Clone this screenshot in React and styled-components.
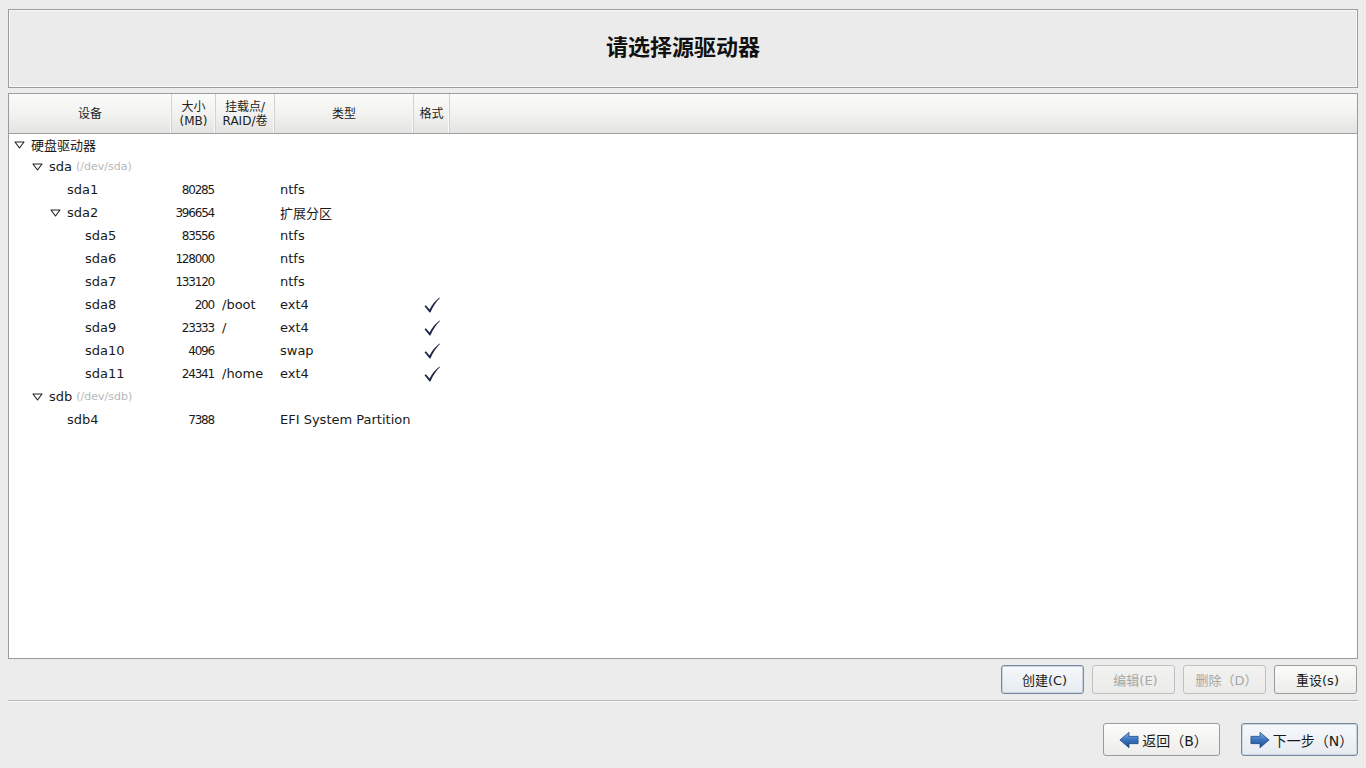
import React from "react";
import styled, { createGlobalStyle } from "styled-components";

const GlobalStyle = createGlobalStyle`
  html, body {
    margin: 0;
    padding: 0;
    background: #ececec;
  }
  body {
    font-family: "DejaVu Sans", "Noto Sans CJK SC", sans-serif;
    font-size: 13px;
    color: #1a1a1a;
  }
`;

const Page = styled.div`
  width: 1366px;
  height: 768px;
  box-sizing: border-box;
  padding: 9px 8px 0 8px;
  display: flex;
  flex-direction: column;
`;

const TitleBox = styled.div`
  height: 79px;
  box-sizing: border-box;
  border: 1px solid #9c9c9a;
  box-shadow: inset 1px 1px 0 #f8f8f6, inset -1px -1px 0 #f8f8f6;
  background: #ebebeb;
  display: flex;
  align-items: center;
  justify-content: center;
`;

const Title = styled.h1`
  margin: 0;
  font-size: 22px;
  font-weight: bold;
  font-family: "DejaVu Sans", "Noto Sans CJK SC", sans-serif;
  color: #111;
  padding-bottom: 8px;
`;

const Panel = styled.div`
  margin-top: 5px;
  height: 566px;
  box-sizing: border-box;
  border: 1px solid #9c9c9a;
  background: #fff;
  display: flex;
  flex-direction: column;
`;

const HeaderRow = styled.div`
  height: 40px;
  box-sizing: border-box;
  display: flex;
  background: linear-gradient(#fbfbfa, #f2f2f0 50%, #e3e3e1);
  border-bottom: 1px solid #a0a09e;
`;

const HeaderCell = styled.div`
  width: ${(p) => p.$w}px;
  box-sizing: border-box;
  border-right: 1px solid #d0d0ce;
  box-shadow: inset -1px 0 0 #fafafa;
  display: flex;
  align-items: center;
  justify-content: center;
  text-align: center;
  font-size: 12px;
  line-height: 14px;
  color: #222;
`;

const Body = styled.div`
  flex: 1;
`;

const Row = styled.div`
  height: ${(p) => (p.$first ? 21 : 23)}px;
  display: flex;
  align-items: center;
  font-size: 13px;
`;

const NameCell = styled.div`
  width: 163px;
  display: flex;
  align-items: center;
  padding-left: ${(p) => 4 + p.$level * 18}px;
  box-sizing: border-box;
  white-space: nowrap;
`;

const Expander = styled.span`
  width: 18px;
  display: inline-flex;
  align-items: center;
  justify-content: flex-start;
  padding-left: 1px;
  box-sizing: border-box;
`;

const Dev = styled.span`
  color: #b8b8b8;
  font-size: 11px;
  margin-left: 4px;
`;

const SizeCell = styled.div`
  width: 42px;
  text-align: right;
  letter-spacing: -1.2px;
  font-size: 12px;
`;

const MountCell = styled.div`
  width: 59px;
  padding-left: 8px;
  box-sizing: border-box;
`;

const TypeCell = styled.div`
  width: 139px;
  padding-left: 7px;
  box-sizing: border-box;
  white-space: nowrap;
`;

const FormatCell = styled.div`
  width: 36px;
  display: flex;
  justify-content: center;
  padding-left: 2px;
`;

const ActionBar = styled.div`
  margin-top: 6px;
  display: flex;
  justify-content: flex-end;
  gap: 8px;
  padding-right: 1px;
`;

const Button = styled.button`
  width: ${(p) => p.$w || 83}px;
  height: ${(p) => p.$h || 29}px;
  box-sizing: border-box;
  border: 1px solid ${(p) => (p.$focus ? "#7a8a9c" : p.$disabled ? "#c0c0be" : "#9a9a98")};
  border-radius: 3px;
  background: ${(p) =>
    p.$focus
      ? "linear-gradient(#f6f8fb, #e6ebf1)"
      : p.$disabled
      ? "linear-gradient(#f2f2f1, #ebebea)"
      : "linear-gradient(#fcfcfb, #ececea)"};
  box-shadow: ${(p) => (p.$focus ? "inset 0 0 0 1px #c8d4e2" : "none")};
  color: ${(p) => (p.$disabled ? "#a6a6a6" : "#1a1a1a")};
  font-family: "DejaVu Sans", "Noto Sans CJK SC", sans-serif;
  font-size: ${(p) => p.$fs || 13}px;
  display: flex;
  align-items: center;
  justify-content: center;
  gap: 3px;
  padding: 0 0 0 4px;
`;

const Separator = styled.div`
  margin-top: 6px;
  height: 1px;
  background: #b8b8b6;
  border-bottom: 1px solid #f8f8f8;
`;

const NavBar = styled.div`
  margin-top: 21px;
  display: flex;
  justify-content: flex-end;
  gap: 21px;
`;

const Triangle = () => (
  <svg width="11" height="8" viewBox="0 0 11 8">
    <path d="M1 1 L10 1 L5.5 7 Z" fill="none" stroke="#222" strokeWidth="1.1" strokeLinejoin="round" />
  </svg>
);

const Check = () => (
  <svg width="18" height="18" viewBox="0 0 18 18">
    <path
      d="M1.5 10.2 L2.8 9.2 L6.6 13.4 C9 8.5 12.5 4.5 16.6 1.4 L17 2 C13 5.8 10 10.5 7.4 16.6 L6.6 16.6 Z"
      fill="#1e2442"
    />
  </svg>
);

const Arrow = ({ dir }) => (
  <svg width="20" height="20" viewBox="0 0 22 20" style={{ transform: dir === "left" ? "scaleX(-1)" : "none" }}>
    <defs>
      <linearGradient id={`ag-${dir}`} x1="0" y1="0" x2="0" y2="1">
        <stop offset="0" stopColor="#8ab4e4" />
        <stop offset="0.45" stopColor="#3c78c2" />
        <stop offset="1" stopColor="#1c4a8e" />
      </linearGradient>
    </defs>
    <path
      d="M1 6 L11 6 L11 1.5 L21 10 L11 18.5 L11 14 L1 14 Z"
      fill={`url(#ag-${dir})`}
      stroke="#1d447e"
      strokeWidth="0.8"
      strokeLinejoin="round"
    />
  </svg>
);

const rows = [
  { level: 0, name: "硬盘驱动器", open: true },
  { level: 1, name: "sda", dev: "(/dev/sda)", open: true },
  { level: 2, name: "sda1", size: "80285", type: "ntfs" },
  { level: 2, name: "sda2", size: "396654", type: "扩展分区", open: true },
  { level: 3, name: "sda5", size: "83556", type: "ntfs" },
  { level: 3, name: "sda6", size: "128000", type: "ntfs" },
  { level: 3, name: "sda7", size: "133120", type: "ntfs" },
  { level: 3, name: "sda8", size: "200", mount: "/boot", type: "ext4", fmt: true },
  { level: 3, name: "sda9", size: "23333", mount: "/", type: "ext4", fmt: true },
  { level: 3, name: "sda10", size: "4096", type: "swap", fmt: true },
  { level: 3, name: "sda11", size: "24341", mount: "/home", type: "ext4", fmt: true },
  { level: 1, name: "sdb", dev: "(/dev/sdb)", open: true },
  { level: 2, name: "sdb4", size: "7388", type: "EFI System Partition" },
];

const App = () => {
  return (
    <Page>
      <GlobalStyle />
      <TitleBox>
        <Title>请选择源驱动器</Title>
      </TitleBox>

      <Panel>
        <HeaderRow>
          <HeaderCell $w={163}>设备</HeaderCell>
          <HeaderCell $w={44}>
            大小
            <br />
            (MB)
          </HeaderCell>
          <HeaderCell $w={59}>
            挂载点/
            <br />
            RAID/卷
          </HeaderCell>
          <HeaderCell $w={139}>类型</HeaderCell>
          <HeaderCell $w={36}>格式</HeaderCell>
        </HeaderRow>
        <Body>
          {rows.map((r, i) => (
            <Row key={r.name} $first={i === 0}>
              <NameCell $level={r.level}>
                <Expander>{r.open && <Triangle />}</Expander>
                {r.name}
                {r.dev && <Dev>{r.dev}</Dev>}
              </NameCell>
              <SizeCell>{r.size}</SizeCell>
              <MountCell>{r.mount}</MountCell>
              <TypeCell>{r.type}</TypeCell>
              <FormatCell>{r.fmt && <Check />}</FormatCell>
            </Row>
          ))}
        </Body>
      </Panel>

      <ActionBar>
        <Button $focus>创建(C)</Button>
        <Button $disabled>编辑(E)</Button>
        <Button $disabled>删除（D）</Button>
        <Button>重设(s)</Button>
      </ActionBar>

      <Separator />

      <NavBar>
        <Button $w={117} $h={33} $fs={14}>
          <Arrow dir="left" />
          返回（B）
        </Button>
        <Button $w={117} $h={33} $fs={14} $focus>
          <Arrow dir="right" />
          下一步（N）
        </Button>
      </NavBar>
    </Page>
  );
};

export default App;
